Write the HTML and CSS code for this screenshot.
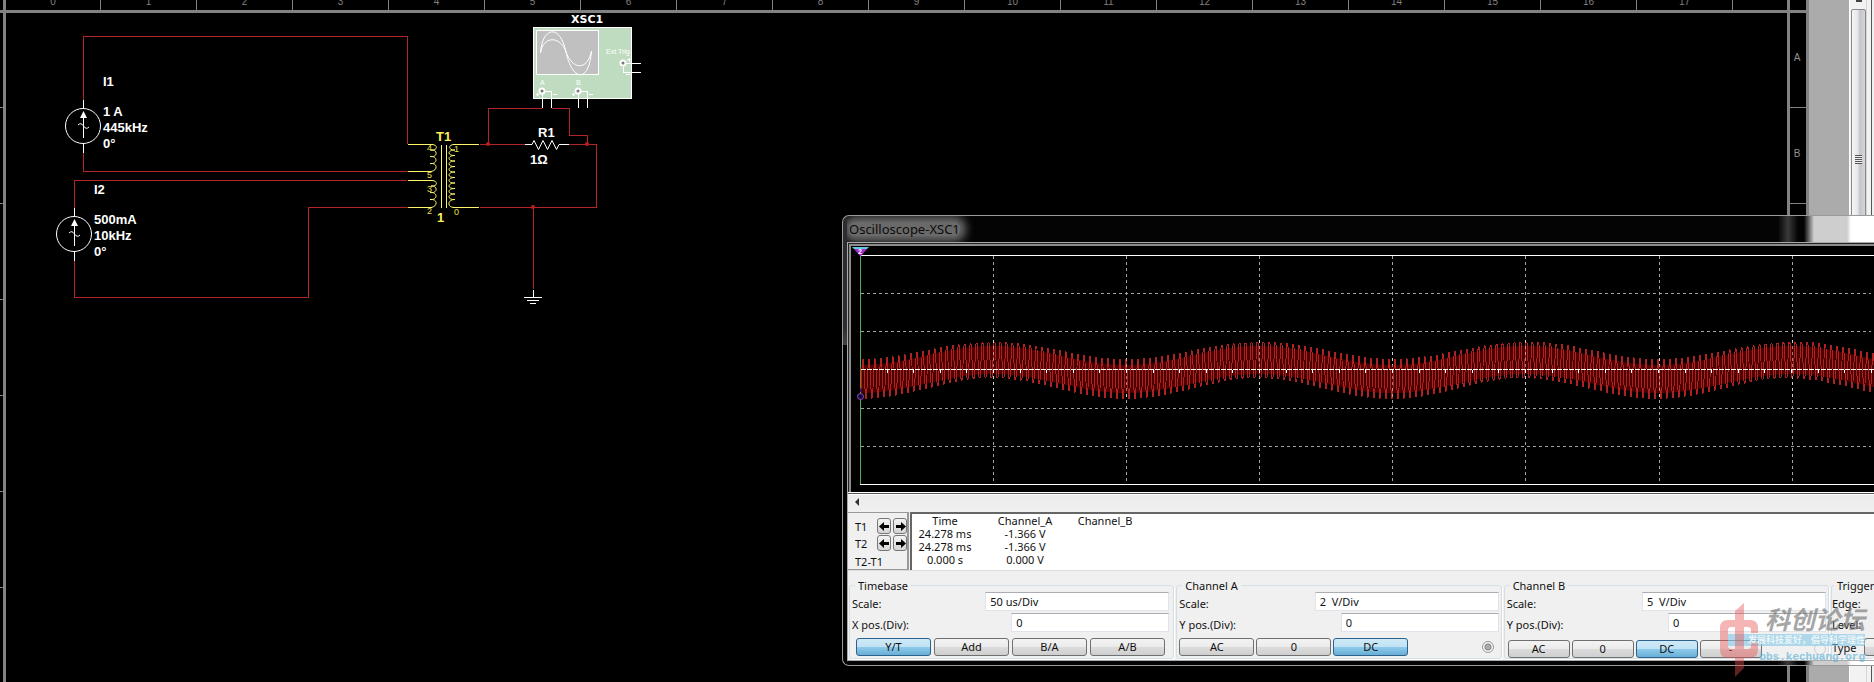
FILE: index.html
```html
<!DOCTYPE html>
<html lang="en">
<head>
<meta charset="utf-8">
<title>Oscilloscope-XSC1</title>
<link rel="stylesheet" href="styles.css">
</head>
<body>
<div class="desk">
  <main class="sheet">
    <div class="edge edge-left">
      <div class="edge-head"></div>
      <div class="edge-cells"><i></i><i></i><i></i><i></i><i></i><i></i><i></i></div>
    </div>
    <div class="page">
      <div class="ruler">
        <span>0</span><span>1</span><span>2</span><span>3</span><span>4</span><span>5</span><span>6</span><span>7</span><span>8</span><span>9</span><span>10</span><span>11</span><span>12</span><span>13</span><span>14</span><span>15</span><span>16</span><span>17</span>
      </div>
      <svg class="schematic" role="img" aria-label="Circuit schematic">
        <g transform="translate(-6 -13)">
          <g class="wire">
            <path d="M83.500 100V36.500H407.500V144M83.500 153V171.500H408M74.500 208V180.500H407M74.500 261V297.500H308.500V207.500H408"/>
            <path d="M480 144.500H525M488.500 144V108.500H542M552 108.500H569.500V135.500H587.500V144M569 144.500H596.500V207.500H480M533.500 207V289"/>
          </g>
          <g class="node"><circle cx="488" cy="144" r="2"/><circle cx="587" cy="144" r="2"/><circle cx="533" cy="207" r="2"/></g>

          <g id="source" class="part">
            <circle cx="83" cy="126" r="17.500"/>
            <path d="M83.500 100V108M83.500 143V153M83.500 112V138M78 125q3-3 5.500 1t5.500 1"/>
            <path class="solid" d="M83.500 111l3.500 7h-7z"/>
          </g>
          <use href="#source" x="-9" y="108"/>
          <path class="part" d="M525 144.500H532l2-4 4.500 9 4.500-9 4.500 9 4.500-9 4.500 9 2.500-5H569"/>
          <path class="part crisp" d="M533.500 290V297M524 297.500H542M527 300.500H539M530 303.500H536"/>

          <g class="coil">
            <path class="crisp" d="M408 144.500H433M408 171.500H432M408 180.500H433M408 207.500H432M453 144.500H479M453 207.500H479M441.500 145V208M446.500 145V208"/>
            <path d="M432 144.500c6 0 6 6.500-1 5.500 7-1 7 8-1 6.500 8-1 8 8 0 7 8-1 8 7 1 8M432 180.500c6 0 6 6.500-1 5.500 7-1 7 8-1 6.500 8-1 8 8 0 7 8-1 8 7 1 8"/>
            <path d="M454 144.500c-6 0-6 6 1 5.500-8 0-8 6 0 5.500-8 0-8 6 0 5.500-8 0-8 6 0 5.500-8 0-8 6 0 5.500-8 0-8 6 0 5.500-8 0-8 6 0 5.500-8 0-8 6 0 5.500-8 0-8 6 0 5.500-8 0-8 6 0 5.500-8 0-8 8-1 8"/>
          </g>
          <g class="pin">
            <text x="427" y="151">4</text><text x="427" y="178">5</text><text x="427" y="192">3</text><text x="427" y="214">2</text>
            <text x="454" y="152">1</text><text x="454" y="215">0</text>
          </g>
          <g class="label">
            <text x="103" y="86">I1</text><text x="103" y="116">1 A</text><text x="103" y="132">445kHz</text><text x="103" y="148">0°</text>
            <text x="94" y="194">I2</text><text x="94" y="224">500mA</text><text x="94" y="240">10kHz</text><text x="94" y="256">0°</text>
            <text x="538" y="137">R1</text><text x="530" y="164">1Ω</text>
            <text class="gold" x="436" y="141">T1</text><text class="gold" x="437" y="222">1</text>
            <text class="name" x="571" y="23">XSC1</text>
          </g>

          <rect class="box" x="533.500" y="27.500" width="98" height="71"/>
          <rect class="screen" x="536.500" y="30.500" width="62" height="44"/>
          <path class="part" d="M540.500 53C542 27 560 23 566 52S589 84 591.500 51M540.500 53C543 36 560 35 566 52S587 72 591.500 51"/>
          <path class="part crisp" d="M542.500 94V108M545 91.500H551.500V108M578.500 94V108M581 91.500H587.500V108M626 63.500H641M623.500 67V72.500H641M536 94.500h3M537.500 93v3M553 94.500h4M572 94.500h3M573.500 93v3M589 94.500h4M627 59.500h4M629 58v4M626 74.500h4"/>
          <g class="jack"><circle cx="542" cy="91" r="2.500"/><circle cx="578" cy="91" r="2.500"/><circle cx="623" cy="63" r="2.500"/></g>
          <g class="tiny"><text x="540" y="85">A</text><text x="576" y="85">B</text><text x="606" y="54">Ext Trig</text></g>
        </g>
      </svg>
    </div>
    <div class="edge edge-right">
      <div class="edge-head"></div>
      <div class="edge-cells"><i>A</i><i>B</i><i></i><i></i><i></i><i></i><i></i></div>
    </div>
  </main>
  <div class="margin"></div>
  <div class="scroller">
    <div class="scroller-up"></div>
    <div class="scroller-thumb"><span class="grip"></span></div>
  </div>
  <div class="far-edge"></div>
</div>

<section class="scope" aria-label="Oscilloscope">
  <header class="titlebar"><span class="caption">Oscilloscope-XSC1</span></header>
  <div class="client">
    <div class="display">
      <svg class="plot" role="img" aria-label="Channel A waveform">
        <g transform="translate(-851 -246)">
          <g class="grid-dash">
            <path d="M861 293.500H1871M861 331.500H1871M861 408.500H1871M861 446.500H1871"/>
            <path d="M993.500 256V484M1126.500 256V484M1259.500 256V484M1392.500 256V484M1525.500 256V484M1659.500 256V484M1792.500 256V484"/>
          </g>
          <path id="band" class="band"/>
          <path id="trace" class="trace"/>
          <path class="frame" d="M860 255.500H4000M860 484.500H4000"/>
          <path class="axis" d="M861 369.500H4000"/>
          <path id="ticks" class="frame"/>
          <path class="cross-dash" d="M993.500 340V400M1126.500 340V400M1259.500 340V400M1392.500 340V400M1525.500 340V400M1659.500 340V400M1792.500 340V400"/>
          <path class="cursor" d="M860.500 256V484"/>
          <path class="cursor-warm" d="M860.500 367V388"/>
          <path class="cursor-cold" d="M860.500 388V392"/>
          <circle class="mark" cx="860.500" cy="396.500" r="3"/>
          <path class="flag-low" d="M854 249h13l-6 7h-1z"/>
          <path class="flag-top" d="M852 247h17l-2 2h-13z"/>
          <text class="flag-text" x="858" y="254">2</text>
        </g>
      </svg>
    </div>
    <div class="hscroll"><button class="hscroll-left" aria-label="Scroll left"></button></div>
    <div class="readout">
      <div class="cursors">
        <span>T1</span>
        <button aria-label="T1 left"><svg viewBox="0 0 11 11"><path d="M0 5.500L5 1v3h5v3H5v3z"/></svg></button>
        <button aria-label="T1 right"><svg viewBox="0 0 11 11"><path d="M11 5.500L6 1v3H1v3h5v3z"/></svg></button>
        <span>T2</span>
        <button aria-label="T2 left"><svg viewBox="0 0 11 11"><path d="M0 5.500L5 1v3h5v3H5v3z"/></svg></button>
        <button aria-label="T2 right"><svg viewBox="0 0 11 11"><path d="M11 5.500L6 1v3H1v3h5v3z"/></svg></button>
        <span class="delta">T2-T1</span>
      </div>
      <div class="values">
        <table>
          <thead><tr><th>Time</th><th>Channel_A</th><th>Channel_B</th></tr></thead>
          <tbody>
            <tr><td>24.278 ms</td><td>-1.366 V</td><td></td></tr>
            <tr><td>24.278 ms</td><td>-1.366 V</td><td></td></tr>
            <tr><td>0.000 s</td><td>0.000 V</td><td></td></tr>
          </tbody>
        </table>
      </div>
    </div>
    <form class="controls">
      <fieldset class="group group-time">
        <legend>Timebase</legend>
        <div class="field"><label for="ts">Scale:</label><input id="ts" class="wide" value="50 us/Div"></div>
        <div class="field"><label for="tx">X pos.(Div):</label><input id="tx" value="0"></div>
        <div class="keys">
          <button type="button" class="on">Y/T</button><button type="button">Add</button><button type="button">B/A</button><button type="button">A/B</button>
        </div>
      </fieldset>
      <fieldset class="group">
        <legend>Channel A</legend>
        <div class="field"><label for="as">Scale:</label><input id="as" class="wide" value="2  V/Div"></div>
        <div class="field"><label for="ay">Y pos.(Div):</label><input id="ay" value="0"></div>
        <div class="keys">
          <button type="button">AC</button><button type="button">0</button><button type="button" class="on">DC</button>
          <input type="radio" name="ca" aria-label="Channel A trigger" checked>
        </div>
      </fieldset>
      <fieldset class="group group-b">
        <legend>Channel B</legend>
        <div class="field"><label for="bs">Scale:</label><input id="bs" class="wide" value="5  V/Div"></div>
        <div class="field"><label for="by">Y pos.(Div):</label><input id="by" value="0"></div>
        <div class="keys">
          <button type="button">AC</button><button type="button">0</button><button type="button" class="on">DC</button><button type="button">-</button>
          <input type="radio" name="cb" aria-label="Channel B trigger">
        </div>
      </fieldset>
      <fieldset class="group group-trigger">
        <legend>Trigger</legend>
        <div class="field"><span>Edge:</span></div>
        <div class="field"><span>Level:</span></div>
        <div class="keys"><span>Type</span><button type="button" aria-label="Trigger type"></button></div>
      </fieldset>
    </form>
  </div>
</section>

<aside class="stamp">
  <svg class="stamp-logo" viewBox="0 0 39 76" aria-hidden="true">
    <path fill-rule="evenodd" d="M15 9L24 1V18H30Q38 18 38 26V31H31V28Q31 25 28 25H24V47H28Q31 47 31 44V41H38V47Q38 56 30 56H24V66L15 75V56H8Q0 56 0 48V26Q0 18 8 18H15zM15 25H11Q8 25 8 28V44Q8 47 11 47H15z"/>
  </svg>
  <div class="stamp-text">
    <div class="stamp-name">科创论坛</div>
    <div class="stamp-motto">发展科技爱好，倡导科学理性</div>
    <div class="stamp-url">bbs.kechuang.org</div>
  </div>
</aside>
<script src="wave.js"></script>
</body>
</html>
```
FILE: styles.css
```css
* { box-sizing: border-box; }

body {
  margin: 0;
  height: 100vh;
  overflow: hidden;
  position: relative;
  background: #000;
  color: #111;
  font: 11px/13px "Noto Sans", "Open Sans", sans-serif;
}

button, input { font: inherit; color: inherit; margin: 0; }

/* schematic sheet */
.desk { display: flex; height: 100%; }
.sheet { flex: 1; min-width: 0; display: flex; background: #000; border-right: 3px solid #828282; overflow: hidden; }
.page { flex: 1; min-width: 0; display: flex; flex-direction: column; border: solid #828282; border-width: 0 3px; }
.ruler {
  display: flex;
  flex: none;
  height: 13px;
  overflow: hidden;
  border-bottom: 3px solid #828282;
  color: #808080;
  font: 10px/4px "Liberation Sans", sans-serif;
}
.ruler span { flex: none; width: 96px; border-right: 1px solid #808080; text-align: center; }
.ruler span:first-child { width: 95px; }
.schematic { flex: 1; width: 100%; min-height: 0; display: block; }

.edge { flex: none; color: #909090; font: 10px/12px "Liberation Sans", sans-serif; overflow: hidden; }
.edge-left { width: 3px; }
.edge-right { width: 16px; }
.edge-head { height: 13px; border-bottom: 3px solid #828282; }
.edge-cells i { display: flex; align-items: center; justify-content: center; height: 96px; padding: 0 2px 4px 0; border-bottom: 1px solid #808080; font-style: normal; }
.edge-cells i:first-child { height: 95px; }

.margin { flex: none; width: 40px; background: #ababab; }
.scroller { flex: none; width: 17px; background: #f2f2f2; display: flex; flex-direction: column; padding: 0 0 0 1px; border-left: 1px solid #fff; }
.scroller-up { height: 9px; background: linear-gradient(#444, #444) 50% 0 / 6px 2px no-repeat; }
.scroller-thumb {
  height: 300px;
  display: flex;
  align-items: center;
  justify-content: center;
  border: 1px solid #8a8a8a;
  border-radius: 2px;
  background: linear-gradient(to right, #f6f6f6, #e6e6e8 45%, #c2c5cc 60%, #d4d6da);
}
.grip { width: 7px; height: 9px; background: repeating-linear-gradient(#555 0 1px, #eee 1px 2px); }
.far-edge { flex: none; width: 8px; background: linear-gradient(to right, #d5d5d5 1px, #f2f2f2 1px 5px, #555 5px 6px, #f0f0f0 6px); }

/* schematic drawing */
.wire { fill: none; stroke: #b02626; shape-rendering: crispEdges; }
.node { fill: #c01c1c; }
.part { fill: none; stroke: #fff; }
.crisp { shape-rendering: crispEdges; }
.solid { fill: #fff; stroke: none; }
.coil { fill: none; stroke: #fff66a; }
.pin { fill: #e6e050; font: 9px "Liberation Sans", sans-serif; }
.label { fill: #fff; font: bold 13px "Liberation Sans", sans-serif; }
.label .gold { fill: #fff05a; }
.label .name { font: bold 11px "DejaVu Sans", sans-serif; }
.box { fill: #c0dcc0; stroke: #fff; }
.screen { fill: #c0c0c0; stroke: #fff; }
.jack { fill: #777; stroke: #fff; stroke-width: 2; }
.tiny { fill: #fff; font: 7px "Liberation Sans", sans-serif; }

/* oscilloscope window */
.scope {
  position: absolute;
  left: 842px;
  right: 0;
  top: 215px;
  padding: 0 0 4px 4px;
  border: 1px solid #9a9a9a;
  border-right: 0;
  border-radius: 7px 0 0 7px;
  background:
    linear-gradient(#2c2c30, #2c2c30 110px, #444) 0 0 / 4px 129px no-repeat,
    linear-gradient(to right, #040404 calc(100% - 96px), #3a3a3a calc(100% - 86px), #040404 calc(100% - 76px), #040404 calc(100% - 70px), #cecece calc(100% - 60px), #cecece calc(100% - 27px), #fff calc(100% - 23px));
}
.titlebar { height: 26px; display: flex; align-items: center; padding-left: 2px; overflow: hidden; }
.caption {
  font: 13px/14px "Noto Sans", "Open Sans", sans-serif;
  color: #0c0c0c;
  background: #6a6a6a;
  border-radius: 6px;
  box-shadow: 0 0 8px 6px #6a6a6a;
}
.client { border: solid #aaa; border-width: 1px 0 1px 1px; background: #f0f0f0; }
.display { margin: 1px 0 0 1px; border: solid #8c8c8c; border-width: 2px 0 0 2px; background: #000; outline: 1px solid #222; }
.plot { display: block; width: 100%; height: 246px; }

.grid-dash, .cross-dash { fill: none; stroke: #a4a4a4; stroke-dasharray: 3 3; shape-rendering: crispEdges; }
.cross-dash { stroke: #fff; opacity: .5; }
.band { fill: #4c0000; }
.trace { fill: none; stroke: #b02222; shape-rendering: crispEdges; }
.frame { fill: none; stroke: #fff; shape-rendering: crispEdges; }
.axis { fill: none; stroke: #fff; stroke-dasharray: 5 1; shape-rendering: crispEdges; }
.cursor { stroke: #52b052; }
.cursor-warm { stroke: #907020; }
.cursor-cold { stroke: #2020a0; }
.mark { fill: #101040; stroke: #a040c0; }
.flag-low { fill: #a030c8; }
.flag-top { fill: #60c8e0; }
.flag-text { fill: #fff; font: bold 7px "Liberation Sans", sans-serif; }

.hscroll { position: relative; z-index: 1; height: 20px; display: flex; align-items: center; padding-left: 7px; background: linear-gradient(#fff 0 1px, #555 1px 2px, #fff 2px 3px, #ebebeb 3px, #f0f0f0); }
.hscroll-left { width: 4px; height: 8px; padding: 0; border: solid transparent; border-width: 4px 4px 4px 0; border-right-color: #333; background: none; }

.readout { display: flex; height: 58px; }
.cursors {
  flex: none;
  width: 61px;
  display: grid;
  grid-template-columns: 20px 14px 14px;
  grid-template-rows: 16px 16px 16px;
  column-gap: 2px;
  row-gap: 1px;
  align-items: center;
  padding: 5px 0 0 7px;
  border: solid #999;
  border-width: 1px 2px 1px 0;
  background: #f0f0f0;
}
.cursors button { display: grid; place-items: center; width: 14px; height: 16px; padding: 0; border: 1px solid #777; border-radius: 3px; background: linear-gradient(#f4f4f4, #d4d4d4); }
.cursors svg { width: 11px; height: 11px; display: block; }
.delta { grid-column: 1 / -1; align-self: end; white-space: nowrap; }
.values { flex: 1; min-width: 0; margin-left: 1px; border: solid #666; border-width: 2px 0 0 2px; background: #fff; }
.values table { border-collapse: collapse; table-layout: fixed; width: 240px; margin-left: -7px; }
.values th, .values td { width: 80px; height: 13px; padding: 0; font-weight: normal; text-align: center; }

.controls {
  display: grid;
  grid-template-columns: 325fr 325fr 325fr 43fr;
  column-gap: 2px;
  padding: 8px 0 1px 1px;
  border-top: 1px solid #ddd;
}
.group { min-width: 0; margin: 0; padding: 0 2px 2px 2px; border: 1px solid #d3dfe4; border-radius: 3px; box-shadow: 1px 1px 0 #fff; }
.group-time { padding-right: 4px; }
.group legend { margin-left: 3px; padding: 0 3px; line-height: 13px; }
.field { display: flex; align-items: center; justify-content: space-between; height: 19px; margin-bottom: 2px; white-space: pre; }
.field label, .field span { padding-top: 4px; }
.field input {
  width: 158px;
  height: 19px;
  padding: 0 4px 1px;
  border: 1px solid #e2e3ea;
  border-top-color: #abadb3;
  background: #fff;
}
.field .wide { width: 184px; }
.keys { display: flex; align-items: center; gap: 2px; height: 22px; padding-top: 4px; }
.keys button {
  width: 75px;
  height: 18px;
  padding: 0;
  line-height: 14px;
  border: 1px solid #707070;
  border-radius: 3px;
  background: linear-gradient(#f3f3f3, #ebebeb 50%, #dcdcdc 50%, #cfcfcf);
}
.keys .on { border-color: #2c628b; background: linear-gradient(#cfe9f7, #c0e2f5 50%, #8fcbea 50%, #68aed6); }
.group-time .keys { padding-left: 4px; gap: 3px; }
.keys input { flex: none; appearance: none; width: 12px; height: 12px; margin-left: auto; margin-right: 5px; border: 1px solid #999; border-radius: 50%; background: #f4f4f4; }
.keys input:checked { background: radial-gradient(#aaa 0 2px, #888 3px, #f4f4f4 4px); }
.group-b .keys { height: 24px; padding-top: 6px; margin-bottom: -2px; padding-left: 1px; }
.group-b .keys button { width: 62px; }
.group-b .keys input { margin-right: 0; opacity: .4; }
.group-trigger { border-right: 0; padding: 0 0 2px; }
.group-trigger legend { margin-left: 2px; padding-right: 0; }
.group-trigger .keys { gap: 8px; overflow: hidden; }
.group-trigger .keys button { flex: none; }

/* watermark over the window corner */
.stamp { position: absolute; right: 9px; bottom: 4px; display: flex; pointer-events: none; }
.stamp-logo { width: 39px; height: 76px; fill: #e85050; opacity: .42; }
.stamp-text { margin-left: -31px; width: 137px; display: flex; flex-direction: column; align-items: flex-end; white-space: nowrap; }
.stamp-name { font: italic bold 25px/32px "Noto Sans CJK SC", sans-serif; color: #777; opacity: .65; }
.stamp-motto { width: 100%; font: 9px/12px "Noto Sans CJK SC", sans-serif; text-align: right; color: #fff; background: rgba(130, 200, 230, .6); }
.stamp-url { margin-top: 4px; font: bold 11px/14px "Liberation Mono", monospace; color: #5ab0d8; opacity: .65; }
```
FILE: wave.js
```js
// 445 kHz carrier riding on a 10 kHz tone, drawn in plot pixels
const LEFT = 861, RIGHT = 4000, MID = 369.5;
const slow = x => MID + 9.5 * Math.cos(2 * Math.PI * (x - 860) / 266);
const fast = x => 20 * Math.cos(2 * Math.PI * (x - 863) / 5.977);

let trace = '', upper = '', lower = '';
for (let x = LEFT; x < RIGHT; x += 1) {
  trace += (trace ? 'L' : 'M') + x + ' ' + (slow(x) - fast(x)).toFixed(1);
  upper += (upper ? 'L' : 'M') + x + ' ' + (slow(x) - 14).toFixed(1);
  lower = 'L' + x + ' ' + (slow(x) + 14).toFixed(1) + lower;
}
document.getElementById('trace').setAttribute('d', trace);
document.getElementById('band').setAttribute('d', upper + lower + 'Z');

let ticks = '';
for (let i = 1; i < 110; i += 1) ticks += 'M' + (Math.round(860 + i * 26.6) + 0.5) + ' 370v3';
document.getElementById('ticks').setAttribute('d', ticks);
```
